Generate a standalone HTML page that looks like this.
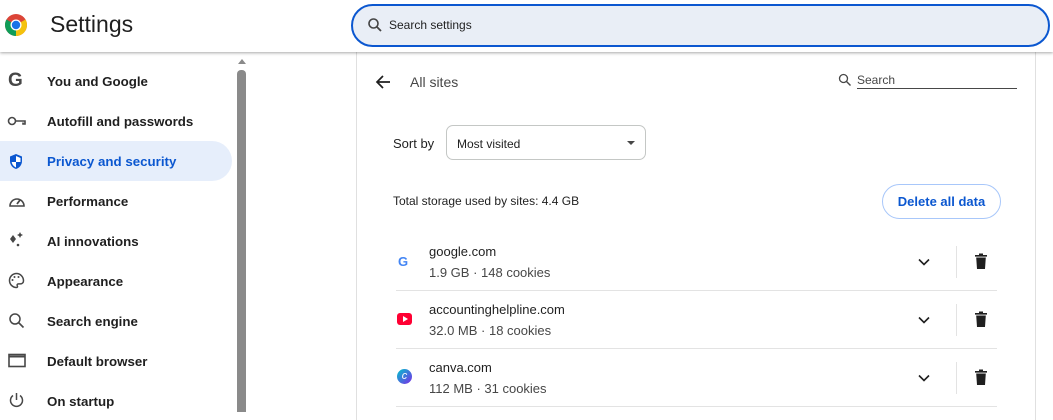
<!DOCTYPE html>
<html><head><style>
*{margin:0;padding:0;box-sizing:border-box}
body{width:1053px;height:412px;overflow:hidden;background:#fff;font-family:"Liberation Sans",sans-serif;color:#1f1f1f;position:relative}
.a{position:absolute}
.hdr{left:0;top:0;width:1053px;height:52px;background:#fff;box-shadow:0 1px 3px rgba(0,0,0,.35);z-index:2}
.nav{font-size:13.3px;font-weight:bold;color:#1f1f1f;left:47px;letter-spacing:0}
.ic{left:8px}
.sub{font-size:13px;color:#474747}
.sep{left:396px;width:601px;height:1px;background:#e3e3e3}
</style></head><body>
<div class="a hdr">
 <svg class="a" style="left:4px;top:13px" width="24" height="24" viewBox="0 0 24 24">
  <circle cx="12" cy="12" r="11" fill="#db4437"/>
  <path d="M12 12 L21.5 6.5 A11 11 0 0 1 12 23 Z" fill="#f4c20d"/>
  <path d="M12 12 L12 23 A11 11 0 0 1 2.5 6.5 Z" fill="#0f9d58"/>
  <circle cx="12" cy="12" r="5.5" fill="#fff"/><circle cx="12" cy="12" r="4.2" fill="#1a73e8"/>
 </svg>
 <div class="a" style="left:50px;top:11px;font-size:23px;color:#1f1f1f">Settings</div>
 <div class="a" style="left:351px;top:4px;width:699px;height:43px;border:2px solid #0b57d0;border-radius:22px;background:#e9eef6"></div>
 <svg class="a" style="left:367px;top:17px" width="16" height="16" viewBox="0 0 16 16"><circle cx="6.5" cy="6.5" r="4.5" stroke="#444" stroke-width="1.6" fill="none"/><path d="M10 10l4 4" stroke="#444" stroke-width="1.8"/></svg>
 <div class="a" style="left:389px;top:18px;font-size:12px;color:#1f1f1f">Search settings</div>
</div>

<div class="a" style="left:0;top:141px;width:232px;height:40px;background:#e6eefb;border-radius:0 20px 20px 0"></div>
<div class="a" style="left:237px;top:70px;width:9px;height:342px;background:#8a8a8a;border-radius:4px 4px 0 0"></div>
<div class="a" style="left:237px;top:59px;width:0;height:0;border-left:4px solid transparent;border-right:4px solid transparent;border-bottom:5px solid #8a8a8a;margin-left:1px"></div>

<div class="a ic" style="top:70px;font-size:19px;font-weight:bold;color:#474747;left:8px">G</div>
<div class="a nav" style="top:74px">You and Google</div>
<svg class="a" style="left:7px;top:114px" width="20" height="14" viewBox="0 0 20 14"><circle cx="5" cy="7" r="3.5" stroke="#474747" stroke-width="1.6" fill="none"/><path d="M8.5 7H18v3h-2V8.5" stroke="#474747" stroke-width="1.6" fill="none"/></svg>
<div class="a nav" style="top:114px">Autofill and passwords</div>
<svg class="a" style="left:9px;top:153px" width="14" height="17" viewBox="0 0 14 17"><path d="M7 1L1 3.5V8c0 4 2.7 7 6 8 3.3-1 6-4 6-8V3.5Z" fill="#0b57d0"/><path d="M7 3v6h4.5V5Z M7 9v5.5C5 13.5 3 11.5 2.7 9Z" fill="#fff"/></svg>
<div class="a nav" style="top:154px;color:#0b57d0">Privacy and security</div>
<svg class="a" style="left:8px;top:193px" width="18" height="16" viewBox="0 0 18 16"><path d="M2 13A7 7 0 1 1 16 13Z" stroke="#474747" stroke-width="1.6" fill="none"/><path d="M9 11l3-4" stroke="#474747" stroke-width="1.8"/></svg>
<div class="a nav" style="top:194px">Performance</div>
<svg class="a" style="left:7px;top:231px" width="18" height="18" viewBox="0 0 18 18"><path d="M6 4l3 4-3 4-3-4Z" fill="#474747"/><path d="M13 1l1 2 2 1-2 1-1 2-1-2-2-1 2-1Z" fill="#474747"/><circle cx="11" cy="14" r="1.3" fill="#474747"/></svg>
<div class="a nav" style="top:234px">AI innovations</div>
<svg class="a" style="left:8px;top:272px" width="17" height="17" viewBox="0 0 17 17"><path d="M8.5 1.5a7 7 0 0 0 0 14c1 0 1.3-.8.8-1.6-.6-1 0-2 1.2-2h2a3 3 0 0 0 3-3c0-4-3-7.4-7-7.4Z" stroke="#474747" stroke-width="1.5" fill="none"/><circle cx="4.5" cy="8" r="1" fill="#474747"/><circle cx="6.5" cy="5" r="1" fill="#474747"/><circle cx="10.5" cy="5" r="1" fill="#474747"/></svg>
<div class="a nav" style="top:274px">Appearance</div>
<svg class="a" style="left:8px;top:312px" width="17" height="17" viewBox="0 0 17 17"><circle cx="7" cy="7" r="5" stroke="#474747" stroke-width="1.5" fill="none"/><path d="M10.5 10.5l5 5" stroke="#474747" stroke-width="1.6"/></svg>
<div class="a nav" style="top:314px">Search engine</div>
<svg class="a" style="left:8px;top:353px" width="18" height="15" viewBox="0 0 18 15"><rect x="1" y="1.5" width="16" height="12" stroke="#474747" stroke-width="1.6" fill="none"/><path d="M1 3.5h16" stroke="#474747" stroke-width="2"/></svg>
<div class="a nav" style="top:354px">Default browser</div>
<svg class="a" style="left:8px;top:392px" width="17" height="17" viewBox="0 0 17 17"><path d="M5 3.5a6 6 0 1 0 7 0" stroke="#474747" stroke-width="1.5" fill="none"/><path d="M8.5 1v7" stroke="#474747" stroke-width="1.5"/></svg>
<div class="a nav" style="top:394px">On startup</div>

<div class="a" style="left:356px;top:50px;width:680px;height:370px;border-left:1px solid #e0e0e0;border-right:1px solid #e0e0e0;background:#fff"></div>
<svg class="a" style="left:375px;top:74px" width="16" height="16" viewBox="0 0 16 16"><path d="M15 8H2M8 2L2 8l6 6" stroke="#1f1f1f" stroke-width="1.7" fill="none"/></svg>
<div class="a" style="left:410px;top:74px;font-size:14px;color:#474747">All sites</div>
<svg class="a" style="left:838px;top:73px" width="14" height="14" viewBox="0 0 14 14"><circle cx="5.5" cy="5.5" r="4" stroke="#474747" stroke-width="1.3" fill="none"/><path d="M8.5 8.5l4 4" stroke="#474747" stroke-width="1.4"/></svg>
<div class="a" style="left:857px;top:73px;font-size:12px;color:#474747">Search</div>
<div class="a" style="left:857px;top:88px;width:160px;height:1px;background:#474747"></div>

<div class="a" style="left:393px;top:136px;font-size:13px;color:#1f1f1f">Sort by</div>
<div class="a" style="left:446px;top:125px;width:200px;height:35px;border:1px solid #c4c7c5;border-radius:7px"></div>
<div class="a" style="left:457px;top:137px;font-size:12px;color:#1f1f1f">Most visited</div>
<div class="a" style="left:627px;top:141px;border-left:4px solid transparent;border-right:4px solid transparent;border-top:4px solid #474747"></div>

<div class="a" style="left:393px;top:194px;font-size:12px;color:#1f1f1f">Total storage used by sites: 4.4 GB</div>
<div class="a" style="left:882px;top:184px;width:119px;height:35px;border:1px solid #a8c7fa;border-radius:18px;color:#0b57d0;font-size:13px;font-weight:bold;text-align:center;line-height:33px">Delete all data</div>

<div class="a" style="left:398px;top:254px;font-size:13px;font-weight:bold;color:#4285f4">G</div>
<div class="a" style="left:429px;top:244px;font-size:13px">google.com</div>
<div class="a sub" style="left:429px;top:265px">1.9 GB · 148 cookies</div>
<div class="a sep" style="top:290px"></div>

<div class="a" style="left:397px;top:313px;width:15px;height:12px;background:#ff0033;border-radius:3px"></div>
<div class="a" style="left:403px;top:316px;border-top:3px solid transparent;border-bottom:3px solid transparent;border-left:5px solid #fff"></div>
<div class="a" style="left:429px;top:302px;font-size:13px">accountinghelpline.com</div>
<div class="a sub" style="left:429px;top:323px">32.0 MB · 18 cookies</div>
<div class="a sep" style="top:348px"></div>

<div class="a" style="left:397px;top:369px;width:15px;height:15px;border-radius:50%;background:linear-gradient(135deg,#00c4cc,#7d2ae8);color:#fff;font-size:11px;font-style:italic;text-align:center;line-height:15px">c</div>
<div class="a" style="left:429px;top:360px;font-size:13px">canva.com</div>
<div class="a sub" style="left:429px;top:381px">112 MB · 31 cookies</div>
<div class="a sep" style="top:406px"></div>

<svg class="a" style="left:918px;top:258px" width="12" height="8" viewBox="0 0 12 8"><path d="M1 1.5l5 5 5-5" stroke="#1f1f1f" stroke-width="1.6" fill="none"/></svg>
<svg class="a" style="left:918px;top:316px" width="12" height="8" viewBox="0 0 12 8"><path d="M1 1.5l5 5 5-5" stroke="#1f1f1f" stroke-width="1.6" fill="none"/></svg>
<svg class="a" style="left:918px;top:374px" width="12" height="8" viewBox="0 0 12 8"><path d="M1 1.5l5 5 5-5" stroke="#1f1f1f" stroke-width="1.6" fill="none"/></svg>
<div class="a" style="left:956px;top:246px;width:1px;height:32px;background:#e3e3e3"></div>
<div class="a" style="left:956px;top:304px;width:1px;height:32px;background:#e3e3e3"></div>
<div class="a" style="left:956px;top:362px;width:1px;height:32px;background:#e3e3e3"></div>
<svg class="a" style="left:975px;top:253px" width="12" height="16" viewBox="0 0 12 16"><path d="M0 2h12v1.6H0Z M4 0.5h4V2H4Z M1.2 4.5h9.6L10 16H2Z" fill="#1f1f1f"/></svg>
<svg class="a" style="left:975px;top:311px" width="12" height="16" viewBox="0 0 12 16"><path d="M0 2h12v1.6H0Z M4 0.5h4V2H4Z M1.2 4.5h9.6L10 16H2Z" fill="#1f1f1f"/></svg>
<svg class="a" style="left:975px;top:369px" width="12" height="16" viewBox="0 0 12 16"><path d="M0 2h12v1.6H0Z M4 0.5h4V2H4Z M1.2 4.5h9.6L10 16H2Z" fill="#1f1f1f"/></svg>
</body></html>
